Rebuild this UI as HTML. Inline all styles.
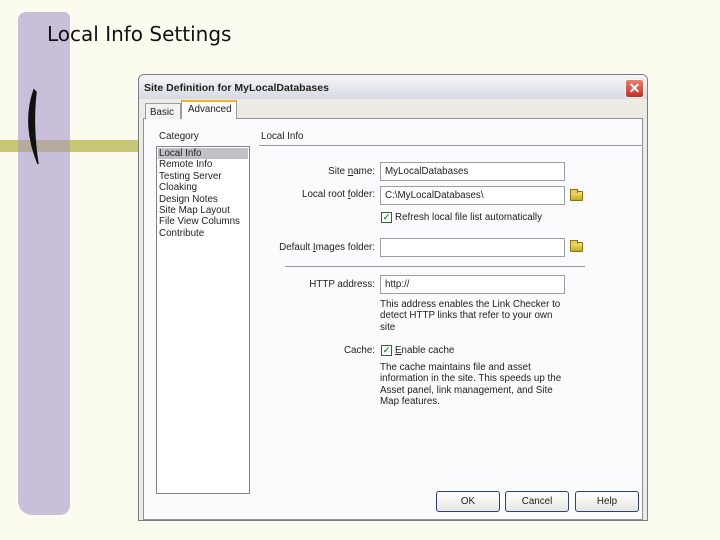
<!DOCTYPE html>
<html><head><meta charset="utf-8"><style>
*{margin:0;padding:0;box-sizing:border-box}
body{width:720px;height:540px;overflow:hidden;background:#fbfbef;font-family:"Liberation Sans",sans-serif;position:relative}
.a{position:absolute}
.t{font-size:9.8px;color:#222;white-space:nowrap}
.inp{position:absolute;background:#fff;border:1px solid #9a9ea6;height:19px;font-size:9.8px;padding:3px 4px;color:#222}
.fold{position:absolute;width:13px;height:10px;background:linear-gradient(#f4e27a,#c9a820);border:1px solid #8c7410;border-radius:1px}
.fold:before{content:"";position:absolute;left:-1px;top:-3px;width:6px;height:3px;background:#e6cc50;border:1px solid #8c7410;border-bottom:none}
.cb{position:absolute;width:11px;height:11px;border:1px solid #2a6a2a;background:#fff;color:#2a9a2a;font-size:9px;line-height:9px;text-align:center;font-weight:bold}
.btn{position:absolute;top:491px;height:21px;width:64px;border:1px solid #30407a;border-radius:3px;background:linear-gradient(#fff,#e6e6e0);font-size:9.8px;text-align:center;line-height:19px;color:#222}
</style></head><body>
<div class="a" style="left:18px;top:12px;width:52px;height:503px;background:#c9bfd9;border-radius:8px 6px 10px 14px"></div>
<div class="a" style="left:0;top:140px;width:140px;height:12px;background:#c8c774"></div>
<div class="a" style="left:18px;top:140px;width:52px;height:12px;background:#b5ab9e"></div>
<svg class="a" style="left:20px;top:88px" width="24" height="80"><path d="M14 2 Q2 36 18 76 Q12 38 16 4Z" fill="#111" stroke="#111" stroke-width="1.5"/></svg>
<div class="a" style="left:47px;top:22px;font-family:'Comic Sans MS','DejaVu Sans',sans-serif;font-size:20px;color:#111">Local Info Settings</div>

<div class="a" style="left:138px;top:74px;width:510px;height:447px;background:#ecebe4;border:1px solid #7b7d82;border-radius:6px 6px 0 0"></div>
<div class="a" style="left:139px;top:75px;width:508px;height:24px;background:linear-gradient(#f6f6fa,#d8d8e2);border-radius:5px 5px 0 0"></div>
<div class="a t" style="left:144px;top:82px;font-size:10.5px;font-weight:bold;color:#222">Site Definition for MyLocalDatabases</div>
<div class="a" style="left:625px;top:79px;width:19px;height:19px;background:linear-gradient(#e88070,#c03020);border:1px solid #fff;border-radius:3px;color:#fff;font-size:14px;text-align:center;line-height:17px;font-weight:bold">✕</div>
<div class="a" style="left:143px;top:118px;width:500px;height:402px;background:#fbfbfd;border:1px solid #8e9096"></div>
<div class="a" style="left:145px;top:103px;width:36px;height:16px;border:1px solid #9a9ca2;border-bottom:none;background:#f2f2f0;font-size:9.8px;padding:3px 4px;color:#222">Basic</div>
<div class="a" style="left:181px;top:100px;width:56px;height:19px;border:1px solid #9a9ca2;border-top:2px solid #f0b030;border-bottom:none;background:#fbfbfd;font-size:9.8px;padding:2px 6px;color:#222">Advanced</div>

<div class="a t" style="left:159px;top:131px">Category</div>
<div class="a t" style="left:261px;top:131px">Local Info</div>
<div class="a" style="left:259px;top:145px;width:383px;height:1px;background:#9a9ca2"></div>
<div class="a" style="left:156px;top:146px;width:94px;height:348px;background:#fff;border:1px solid #7f858c"></div>
<div class="a" style="left:158px;top:148px;width:90px;height:11px;background:#c0c0c8"></div>
<div class="a t" style="left:159px;top:148px;line-height:11.4px">Local Info<br>Remote Info<br>Testing Server<br>Cloaking<br>Design Notes<br>Site Map Layout<br>File View Columns<br>Contribute</div>

<div class="a t" style="right:345px;top:166px">Site <u>n</u>ame:</div>
<div class="inp" style="left:380px;top:162px;width:185px">MyLocalDatabases</div>
<div class="a t" style="right:345px;top:189px">Local root <u>f</u>older:</div>
<div class="inp" style="left:380px;top:186px;width:185px">C:\MyLocalDatabases\</div>
<div class="fold" style="left:570px;top:191px"></div>
<div class="cb" style="left:381px;top:212px">✓</div>
<div class="a t" style="left:395px;top:212px">Refresh local file list automatically</div>
<div class="a t" style="right:345px;top:242px">Default <u>I</u>mages folder:</div>
<div class="inp" style="left:380px;top:238px;width:185px"></div>
<div class="fold" style="left:570px;top:242px"></div>
<div class="a" style="left:285px;top:266px;width:300px;height:1px;background:#9a9ca2"></div>
<div class="a t" style="right:345px;top:279px">HTTP address:</div>
<div class="inp" style="left:380px;top:275px;width:185px">http://</div>
<div class="a t" style="left:380px;top:299px;line-height:11.4px">This address enables the Link Checker to<br>detect HTTP links that refer to your own<br>site</div>
<div class="a t" style="right:345px;top:345px">Cache:</div>
<div class="cb" style="left:381px;top:345px">✓</div>
<div class="a t" style="left:395px;top:345px"><u>E</u>nable cache</div>
<div class="a t" style="left:380px;top:362px;line-height:11.4px">The cache maintains file and asset<br>information in the site.  This speeds up the<br>Asset panel, link management, and Site<br>Map features.</div>

<div class="btn" style="left:436px">OK</div>
<div class="btn" style="left:505px">Cancel</div>
<div class="btn" style="left:575px">Help</div>
</body></html>
